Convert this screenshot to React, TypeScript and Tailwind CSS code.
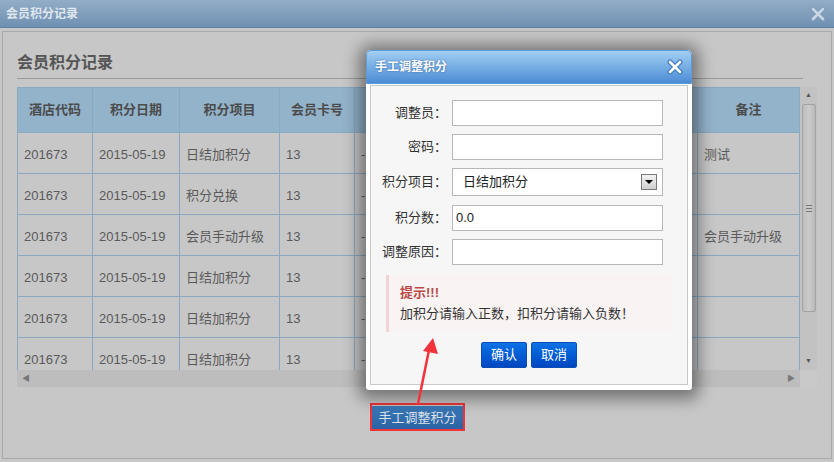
import React from 'react';

const rows = [
  { item: '日结加积分', note: '测试' },
  { item: '积分兑换', note: '' },
  { item: '会员手动升级', note: '会员手动升级' },
  { item: '日结加积分', note: '' },
  { item: '日结加积分', note: '' },
  { item: '日结加积分', note: '' },
];

// columns 5-7 sit under the dialog, so their titles are not shown
const cols = [
  { title: '酒店代码', w: 'w-[75px]' },
  { title: '积分日期', w: 'w-[87px]' },
  { title: '积分项目', w: 'w-[100px]' },
  { title: '会员卡号', w: 'w-[75px]' },
  { title: '', w: 'w-[100px]' },
  { title: '', w: 'w-[120px]' },
  { title: '', w: 'w-[123px]' },
  { title: '备注', w: 'w-[102px]' },
];

const CloseX = ({ light }: { light?: boolean }) => (
  <svg width="16" height="16" viewBox="0 0 16 16">
    <path d="M3 3 L13 13 M13 3 L3 13" stroke={light ? '#7f9bb8' : '#3d7cc4'} strokeWidth="5" strokeLinecap="round" />
    <path d="M3 3 L13 13 M13 3 L3 13" stroke={light ? '#c9d6e3' : '#ffffff'} strokeWidth="2.6" strokeLinecap="round" />
  </svg>
);

const FormRow = ({ label, children, mt }: { label: string; children: React.ReactNode; mt: string }) => (
  <div className={`flex items-center ${mt}`}>
    <div className="w-[76px] text-right text-[13px] text-[#333]">{label}</div>
    {children}
  </div>
);

const Input = ({ value }: { value?: string }) => (
  <div className="ml-[5px] w-[211px] h-[26px] border border-[#b8b8b8] bg-white flex items-center px-[3px] text-[13px] text-[#222]">
    {value}
  </div>
);

const App: React.FC = () => {
  const cells = (r: { item: string; note: string }) => [
    '201673',
    '2015-05-19',
    r.item,
    '13',
    '-',
    '',
    '',
    r.note,
  ];

  return (
    <div className="relative w-[834px] h-[462px] overflow-hidden bg-[#c7c7c7] font-['Liberation_Sans','Noto_Sans_CJK_SC',sans-serif]">
      {/* outer window title */}
      <div className="h-[28px] flex items-center justify-between bg-gradient-to-b from-[#93adc6] to-[#6f90b2] border-b border-[#5d80a6] pl-[6px] pr-[8px]">
        <span className="text-[12px] font-bold text-[#dfe6ee]">会员积分记录</span>
        <CloseX light />
      </div>

      {/* panel */}
      <div className="mx-[2px] mt-[3px] h-[428px] border border-[#a9a9a9] pl-[14px] pr-[13px]">
        <div className="pt-[21px] pb-[5px] border-b border-[#9a9a9a] mr-[15px] text-[16px] font-bold text-[#555] leading-[20px]">
          会员积分记录
        </div>

        {/* grid */}
        <div className="mt-[8px] w-[801px]">
          <div className="flex h-[283px]">
            <div className="w-[783px] overflow-hidden border-l border-[#8aa8c1]">
              <div className="flex h-[46px] bg-[#93b3cb] border-y border-[#8aa8c1]">
                {cols.map((c, i) => (
                  <div
                    key={i}
                    className={`${c.w} shrink-0 border-r border-[#8aa8c1] flex items-center justify-center text-[13px] font-bold text-[#4b4b4b]`}
                  >
                    {c.title}
                  </div>
                ))}
              </div>
              {rows.map((r, ri) => (
                <div key={ri} className="flex h-[41px] border-b border-[#8aa8c1]">
                  {cells(r).map((v, ci) => (
                    <div
                      key={ci}
                      className={`${cols[ci].w} shrink-0 border-r border-[#8aa8c1] flex items-center pl-[6px] pt-[3px] text-[13px] text-[#5a5a5a]`}
                    >
                      {v}
                    </div>
                  ))}
                </div>
              ))}
            </div>
            {/* vertical scrollbar */}
            <div className="w-[17px] bg-[#c2c2c2] flex flex-col items-center">
              <div className="h-[17px] flex items-center justify-center text-[7px] text-[#555]">▲</div>
              <div className="w-[14px] h-[208px] rounded-[2px] border border-[#a3a3a3] bg-gradient-to-r from-[#bdbdbd] via-[#cbcbcb] to-[#b9b9b9] flex items-center justify-center">
                <div className="flex flex-col gap-[2px]">
                  <div className="w-[6px] h-[1px] bg-[#777]" />
                  <div className="w-[6px] h-[1px] bg-[#777]" />
                  <div className="w-[6px] h-[1px] bg-[#777]" />
                </div>
              </div>
              <div className="flex-1" />
              <div className="h-[17px] flex items-center justify-center text-[7px] text-[#555]">▼</div>
            </div>
          </div>
          {/* horizontal scrollbar */}
          <div className="flex h-[17px]">
            <div className="w-[783px] bg-[#bdbdbd] flex items-center justify-between px-[5px] text-[8px] text-[#777]">
              <span>◀</span>
              <span>▶</span>
            </div>
            <div className="w-[17px] bg-[#c9c9c9]" />
          </div>
        </div>

        <div className="mt-[16px] flex justify-center">
          <div className="border-2 border-[#f0333b]">
            <button className="h-[23px] px-[6px] bg-gradient-to-b from-[#3a7ab8] to-[#2b62a3] text-[13px] text-[#d9e1ea]">
              手工调整积分
            </button>
          </div>
        </div>
      </div>

      {/* modal dialog */}
      <div className="absolute left-[366px] top-[50px] w-[326px] h-[340px] bg-white rounded-t-[5px] rounded-b-[3px] shadow-[0_2px_16px_7px_rgba(0,0,0,0.42)] flex flex-col">
        <div className="h-[34px] rounded-t-[5px] bg-gradient-to-b from-[#a2cff2] to-[#4b8bd5] border border-[#5c9bd9] flex items-center justify-between pl-[8px] pr-[8px]">
          <span className="text-[12px] font-bold text-white [text-shadow:0_0_2px_#2f5f99]">手工调整积分</span>
          <CloseX />
        </div>
        <div className="mx-[4px] mt-[1px] h-[300px] bg-[#f6f6f6] border border-[#c9c9c9] pt-[14px]">
          <FormRow label="调整员：" mt="mt-0">
            <Input />
          </FormRow>
          <FormRow label="密码：" mt="mt-[8px]">
            <Input />
          </FormRow>
          <FormRow label="积分项目：" mt="mt-[8px]">
            <div className="ml-[5px] w-[211px] h-[28px] border border-[#b8b8b8] bg-white flex items-center justify-between pl-[10px] pr-[5px] text-[13px] text-[#222]">
              <span>日结加积分</span>
              <div className="w-[16px] h-[16px] border border-[#7a7a7a] bg-gradient-to-b from-[#f2f2f2] to-[#cfcfcf] flex items-center justify-center">
                <div className="w-0 h-0 border-l-[4px] border-r-[4px] border-t-[4px] border-l-transparent border-r-transparent border-t-black" />
              </div>
            </div>
          </FormRow>
          <FormRow label="积分数：" mt="mt-[9px]">
            <Input value="0.0" />
          </FormRow>
          <FormRow label="调整原因：" mt="mt-[8px]">
            <Input />
          </FormRow>

          <div className="mt-[10px] ml-[15px] w-[286px] h-[57px] bg-[#faf3f3] border-l-[3px] border-[#f1d2d6] pl-[11px] pt-[9px]">
            <div className="text-[13px] font-bold text-[#b94a48] leading-[18px]">提示!!!</div>
            <div className="mt-[3px] text-[13px] text-[#333] leading-[18px]">加积分请输入正数，扣积分请输入负数！</div>
          </div>

          <div className="mt-[10px] flex justify-center gap-[4px]">
            <button className="w-[46px] h-[26px] rounded-[2px] bg-gradient-to-b from-[#0e72e6] to-[#0046c2] border border-[#0a4fb8] text-[13px] text-white">确认</button>
            <button className="w-[46px] h-[26px] rounded-[2px] bg-gradient-to-b from-[#0e72e6] to-[#0046c2] border border-[#0a4fb8] text-[13px] text-white">取消</button>
          </div>
        </div>
      </div>

      {/* annotation arrow */}
      <svg className="absolute left-[410px] top-[334px]" width="32" height="72" viewBox="0 0 32 72">
        <path d="M8 70 L19 16" stroke="#f2333b" strokeWidth="2.5" />
        <path d="M23 4 L28 20 L13 17 Z" fill="#f2333b" />
      </svg>
    </div>
  );
};

export default App;
